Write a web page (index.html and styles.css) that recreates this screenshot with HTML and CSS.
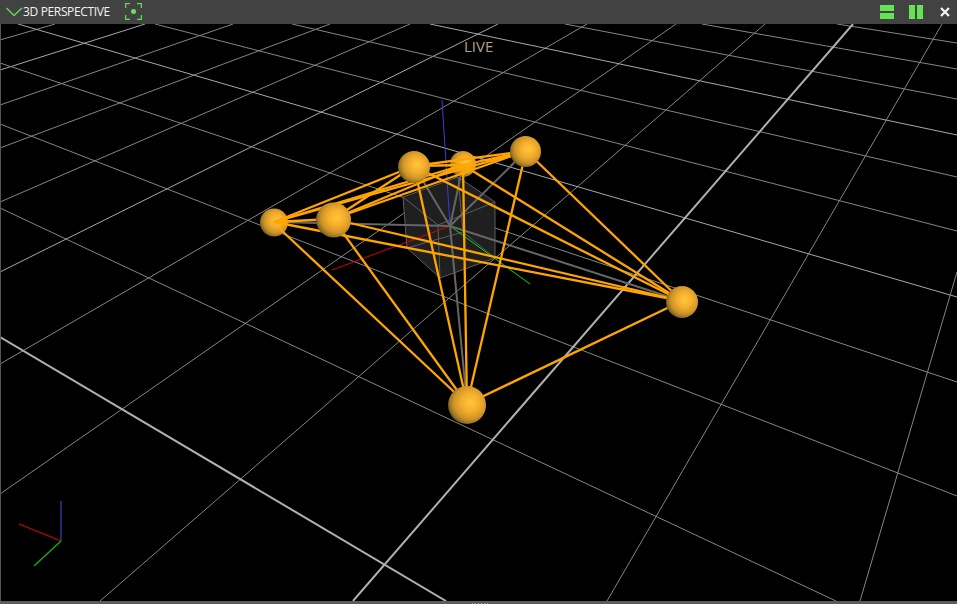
FILE: index.html
```html
<!DOCTYPE html>
<html lang="en">
<head>
<meta charset="utf-8">
<title>3D Perspective</title>
<link rel="stylesheet" href="styles.css">
</head>
<body>
<div class="app">
  <header class="bar">
    <div class="bar-left">
      <svg class="chevron" width="17" height="10" viewBox="0 0 17 10"><path class="ic-stroke" d="M0.500 1 L8 8.500 L16 1"/></svg>
      <span class="title">3D PERSPECTIVE</span>
      <svg class="focus" width="17" height="17" viewBox="0 0 17 17">
        <path class="ic-stroke" d="M0.500 5V0.500H5M12 0.500H16.500V5M16.500 12V16.500H12M5 16.500H0.500V12"/>
        <circle class="ic-fill" cx="8.500" cy="8.500" r="2.500"/>
      </svg>
    </div>
    <div class="bar-right">
      <svg class="ic-rows" width="14" height="14" viewBox="0 0 14 14"><rect class="ic-fill" x="0" y="0" width="14" height="6"/><rect class="ic-fill" x="0" y="8" width="14" height="6"/></svg>
      <svg class="ic-cols" width="14" height="14" viewBox="0 0 14 14"><rect class="ic-fill" x="0" y="0" width="6" height="14"/><rect class="ic-fill" x="8" y="0" width="6" height="14"/></svg>
      <svg class="ic-close" width="10" height="10" viewBox="0 0 10 10"><path class="ic-x" d="M1 1L9 9M9 1L1 9"/></svg>
    </div>
  </header>
  <main class="view">
    <svg class="scene" width="956" height="577" viewBox="1 24 956 577">
      <defs>
        <radialGradient id="ball" cx="0.59" cy="0.43" r="0.62">
          <stop offset="0" stop-color="#ffc83a"/>
          <stop offset="0.4" stop-color="#f4ad2c"/>
          <stop offset="0.7" stop-color="#cf9428"/>
          <stop offset="0.88" stop-color="#9a7524"/>
          <stop offset="1" stop-color="#5f4a1e"/>
        </radialGradient>
      </defs>
      <g class="grid">
        <line x1="55" y1="24" x2="0" y2="40"/>
        <line class="hi" x1="145" y1="24" x2="0" y2="70"/>
        <line x1="233" y1="24" x2="0" y2="105"/>
        <line x1="330" y1="24" x2="0" y2="148"/>
        <line x1="410" y1="24" x2="0" y2="202"/>
        <line class="hi" x1="498" y1="24" x2="0" y2="272"/>
        <line x1="587" y1="24" x2="0" y2="364"/>
        <line x1="676" y1="24" x2="0" y2="494"/>
        <line x1="765" y1="24" x2="100" y2="601"/>
        <line x1="942" y1="24" x2="607" y2="601"/>
        <line x1="957" y1="272" x2="860" y2="601"/>
        <line x1="837" y1="24" x2="957" y2="43"/>
        <line x1="702" y1="24" x2="957" y2="69"/>
        <line x1="565" y1="24" x2="957" y2="99"/>
        <line class="hi" x1="430" y1="24" x2="957" y2="135"/>
        <line x1="292" y1="24" x2="957" y2="177"/>
        <line x1="155" y1="24" x2="957" y2="231"/>
        <line class="hi" x1="18" y1="24" x2="957" y2="297"/>
        <line x1="0" y1="63" x2="957" y2="382"/>
        <line x1="0" y1="124" x2="957" y2="496"/>
        <line x1="0" y1="208" x2="836" y2="601"/>
        <line class="major" x1="853" y1="24" x2="353" y2="601"/>
        <line class="major" x1="0" y1="337" x2="446" y2="601"/>
      </g>
      <path class="cube" d="M403 197L458 177L495 202V258L440 278L407 248Z"/>
      <path class="cube-edge" d="M403 197L438 225L495 202M438 225L440 278M458 177L463 232L407 248M463 232L495 258"/>
      <line class="axis-b" x1="450" y1="226" x2="442" y2="100"/>
      <line class="axis-r" x1="450" y1="226" x2="332" y2="270"/>
      <line class="axis-g" x1="450" y1="226" x2="530" y2="284"/>
      <g class="spokes">
        <line x1="450" y1="226" x2="274" y2="222"/>
        <line x1="450" y1="226" x2="414" y2="166"/>
        <line x1="450" y1="226" x2="463" y2="165"/>
        <line x1="450" y1="226" x2="526" y2="151"/>
        <line x1="450" y1="226" x2="682" y2="301"/>
        <line x1="450" y1="226" x2="467" y2="404"/>
      </g>
      <circle class="ball" cx="274" cy="222.500" r="14"/>
      <circle class="ball" cx="463" cy="164" r="13"/>
      <g class="links">
        <line x1="274" y1="222" x2="333" y2="219"/>
        <line x1="274" y1="222" x2="414" y2="166"/>
        <line x1="274" y1="222" x2="463" y2="165"/>
        <line x1="274" y1="222" x2="526" y2="151"/>
        <line x1="274" y1="222" x2="682" y2="301"/>
        <line x1="280" y1="229" x2="467" y2="404"/>
        <line x1="333" y1="219" x2="414" y2="166"/>
        <line x1="333" y1="219" x2="463" y2="165"/>
        <line x1="333" y1="219" x2="526" y2="151"/>
        <line x1="333" y1="219" x2="682" y2="301"/>
        <line x1="333" y1="219" x2="467" y2="404"/>
        <line x1="414" y1="166" x2="463" y2="165"/>
        <line x1="414" y1="166" x2="526" y2="151"/>
        <line x1="414" y1="166" x2="682" y2="301"/>
        <line x1="414" y1="166" x2="467" y2="404"/>
        <line x1="463" y1="165" x2="526" y2="151"/>
        <line x1="463" y1="165" x2="682" y2="301"/>
        <line x1="463" y1="165" x2="467" y2="404"/>
        <line x1="526" y1="151" x2="682" y2="301"/>
        <line x1="526" y1="151" x2="467" y2="404"/>
        <line x1="682" y1="301" x2="467" y2="404"/>
      </g>
      <circle class="ball" cx="333.500" cy="220" r="17.500"/>
      <circle class="ball" cx="414" cy="167" r="16"/>
      <circle class="ball" cx="525.500" cy="151.500" r="15.500"/>
      <circle class="ball" cx="682" cy="302" r="16"/>
      <circle class="ball" cx="467" cy="405" r="19"/>
      <line class="giz-b" x1="61" y1="541" x2="61" y2="501"/>
      <line class="giz-r" x1="61" y1="541" x2="19" y2="524"/>
      <line class="giz-g" x1="61" y1="541" x2="34" y2="566"/>
    </svg>
    <div class="live">LIVE</div>
  </main>
  <footer class="foot"><span class="grip"></span></footer>
</div>
</body>
</html>
```
FILE: styles.css
```css
* { box-sizing: border-box; }
html, body { margin: 0; height: 100%; background: #000; overflow: hidden; }
.app { width: 957px; height: 604px; display: flex; flex-direction: column; }
.bar {
  height: 24px; flex: none; background: #424242;
  display: flex; align-items: center; justify-content: space-between;
  padding: 0 7px 0 6px;
}
.bar-left { display: flex; align-items: center; margin-bottom: 2px; }
.bar-right { display: flex; align-items: center; }
.chevron { margin-top: 2px; }
.title {
  font: 12px "Open Sans", sans-serif; color: #f2f2f2;
  white-space: nowrap; letter-spacing: -0.35px;
}
.focus { margin-left: 15px; }
.ic-stroke { fill: none; stroke: #5fdc50; stroke-width: 1.5; }
.ic-fill { fill: #66e354; }
.ic-x { fill: none; stroke: #f4f4f4; stroke-width: 2.2; }
.ic-cols { margin-left: 15px; }
.ic-close { margin-left: 17px; }
.view { flex: 1; position: relative; border-left: 1px solid #555; background: #000; min-height: 0; }
.scene { display: block; }
.grid line { stroke: #858585; stroke-width: 1; }
.grid line.hi { stroke: #a8a8a8; }
.grid line.major { stroke: #b0b0b0; stroke-width: 2; }
.cube { fill: #1f1f1f; stroke: #5c5c5c; stroke-width: 1; }
.cube-edge { fill: none; stroke: #5c5c5c; stroke-width: 1; }
.axis-b { stroke: #3a3ae0; stroke-width: 1; }
.axis-r { stroke: #d80000; stroke-width: 1; }
.axis-g { stroke: #00e000; stroke-width: 1; }
.spokes line { stroke: #666; stroke-width: 2; }
.links line { stroke: #ffa500; stroke-width: 2.3; }
.ball { fill: url(#ball); }
.giz-b { stroke: #333399; stroke-width: 1.5; }
.giz-r { stroke: #d40000; stroke-width: 1.2; }
.giz-g { stroke: #00c000; stroke-width: 1.2; }
.live {
  position: absolute; top: 12px; left: 463px;
  font: 15px "Open Sans", sans-serif; color: #ada28c;
}
.foot { height: 3px; flex: none; background: #5c5c5c; position: relative; }
.grip {
  position: absolute; left: 472px; top: 2px; width: 17px; height: 1px;
  background: repeating-linear-gradient(90deg, #aaa 0 1px, transparent 1px 3px);
}
```
